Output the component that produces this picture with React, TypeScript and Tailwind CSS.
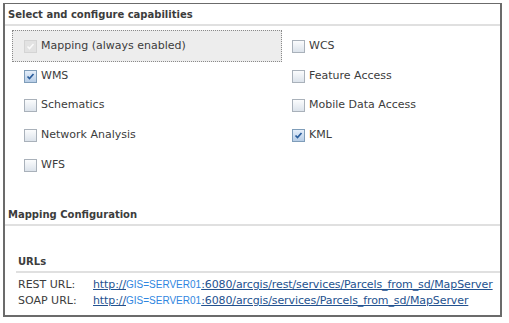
import type { ReactNode } from "react"

type Cap = { label: string; checked?: boolean; disabled?: boolean }

function Box({ checked, disabled }: { checked?: boolean; disabled?: boolean }) {
  if (disabled) {
    return (
      <span className="flex h-[13px] w-[13px] items-center justify-center border border-[#d4d4d4] bg-[#e2e2e2]">
        <svg width="9" height="9" viewBox="0 0 9 9">
          <path d="M1.5 4.5 L3.5 6.5 L7.5 2" fill="none" stroke="#fafafa" strokeWidth="1.6" />
        </svg>
      </span>
    )
  }
  return (
    <span
      className={
        checked
          ? "flex h-[13px] w-[13px] items-center justify-center border border-[#7f9db9] bg-gradient-to-b from-[#e4eefa] to-[#b7cde6]"
          : "flex h-[13px] w-[13px] items-center justify-center border border-[#a9b1ba] bg-gradient-to-b from-[#fbfcfd] to-[#dce3eb]"
      }
    >
      {checked && (
        <svg width="9" height="9" viewBox="0 0 9 9">
          <path d="M1.5 4.5 L3.5 6.5 L7.5 2" fill="none" stroke="#2a5d9c" strokeWidth="1.7" />
        </svg>
      )}
    </span>
  )
}

function Item({ cap }: { cap: Cap }) {
  return (
    <div className="flex items-center gap-[4px]">
      <Box checked={cap.checked} disabled={cap.disabled} />
      <span>{cap.label}</span>
    </div>
  )
}

function Heading({ children }: { children: ReactNode }) {
  return (
    <div className="border-b-2 border-[#e0e0e0] pb-[2px] pl-[3px] text-[10px] font-bold leading-[14px]">
      {children}
    </div>
  )
}

const left: Cap[] = [
  { label: "WMS", checked: true },
  { label: "Schematics" },
  { label: "Network Analysis" },
  { label: "WFS" },
]

const right: Cap[] = [
  { label: "WCS" },
  { label: "Feature Access" },
  { label: "Mobile Data Access" },
  { label: "KML", checked: true },
]

const rowH = ["h-[28px]", "h-[30px]", "h-[30px]", "h-[30px]"]

function Url({ path }: { path: string }) {
  return (
    <span className="tracking-[-0.1px] text-[#24528f]">
      <span className="underline">http://</span>
      <span className="font-['Liberation_Sans',sans-serif] text-[10px] tracking-normal text-[#2f86e0]">GIS=SERVER01</span>
      <span className="underline">{path}</span>
    </span>
  )
}

export default function App() {
  return (
    <div className="h-[323px] w-[509px] bg-white pl-[3px] pt-[3px] font-['DejaVu_Sans',sans-serif] text-[11px] text-[#3c3c3c]">
      <div className="h-[314px] w-[499px] border-2 border-t border-[#6b6b6b]">
        <div className="pt-[4px]">
          <Heading>Select and configure capabilities</Heading>
        </div>

        <div className="mt-[4px] flex">
          <div className="w-[277px] pl-[7px]">
            <div className="flex h-[32px] items-center border border-dotted border-[#8a8a8a] bg-[#ededed] pl-[11px]">
              <Item cap={{ label: "Mapping (always enabled)", checked: true, disabled: true }} />
            </div>
            {left.map((c, i) => (
              <div key={c.label} className={`flex items-center pl-[12px] ${rowH[i]}`}>
                <Item cap={c} />
              </div>
            ))}
          </div>
          <div className="pl-[10px]">
            <div className="flex h-[32px] items-center">
              <Item cap={right[0]} />
            </div>
            {right.slice(1).map((c, i) => (
              <div key={c.label} className={`flex items-center ${rowH[i]}`}>
                <Item cap={c} />
              </div>
            ))}
          </div>
        </div>

        <div className="mt-[28px]">
          <Heading>Mapping Configuration</Heading>
        </div>

        <div className="mt-[29px] pl-[11px]">
          <div className="border-b-2 border-[#e0e0e0] pb-[2px] pl-[2px] text-[10px] font-bold leading-[14px]">URLs</div>
          <div className="mt-[4px] flex h-[16px] items-center pl-[2px]">
            <span className="w-[75px]">REST URL:</span>
            <Url path=":6080/arcgis/rest/services/Parcels_from_sd/MapServer" />
          </div>
          <div className="flex h-[16px] items-center pl-[2px]">
            <span className="w-[75px]">SOAP URL:</span>
            <Url path=":6080/arcgis/services/Parcels_from_sd/MapServer" />
          </div>
        </div>
      </div>
    </div>
  )
}
